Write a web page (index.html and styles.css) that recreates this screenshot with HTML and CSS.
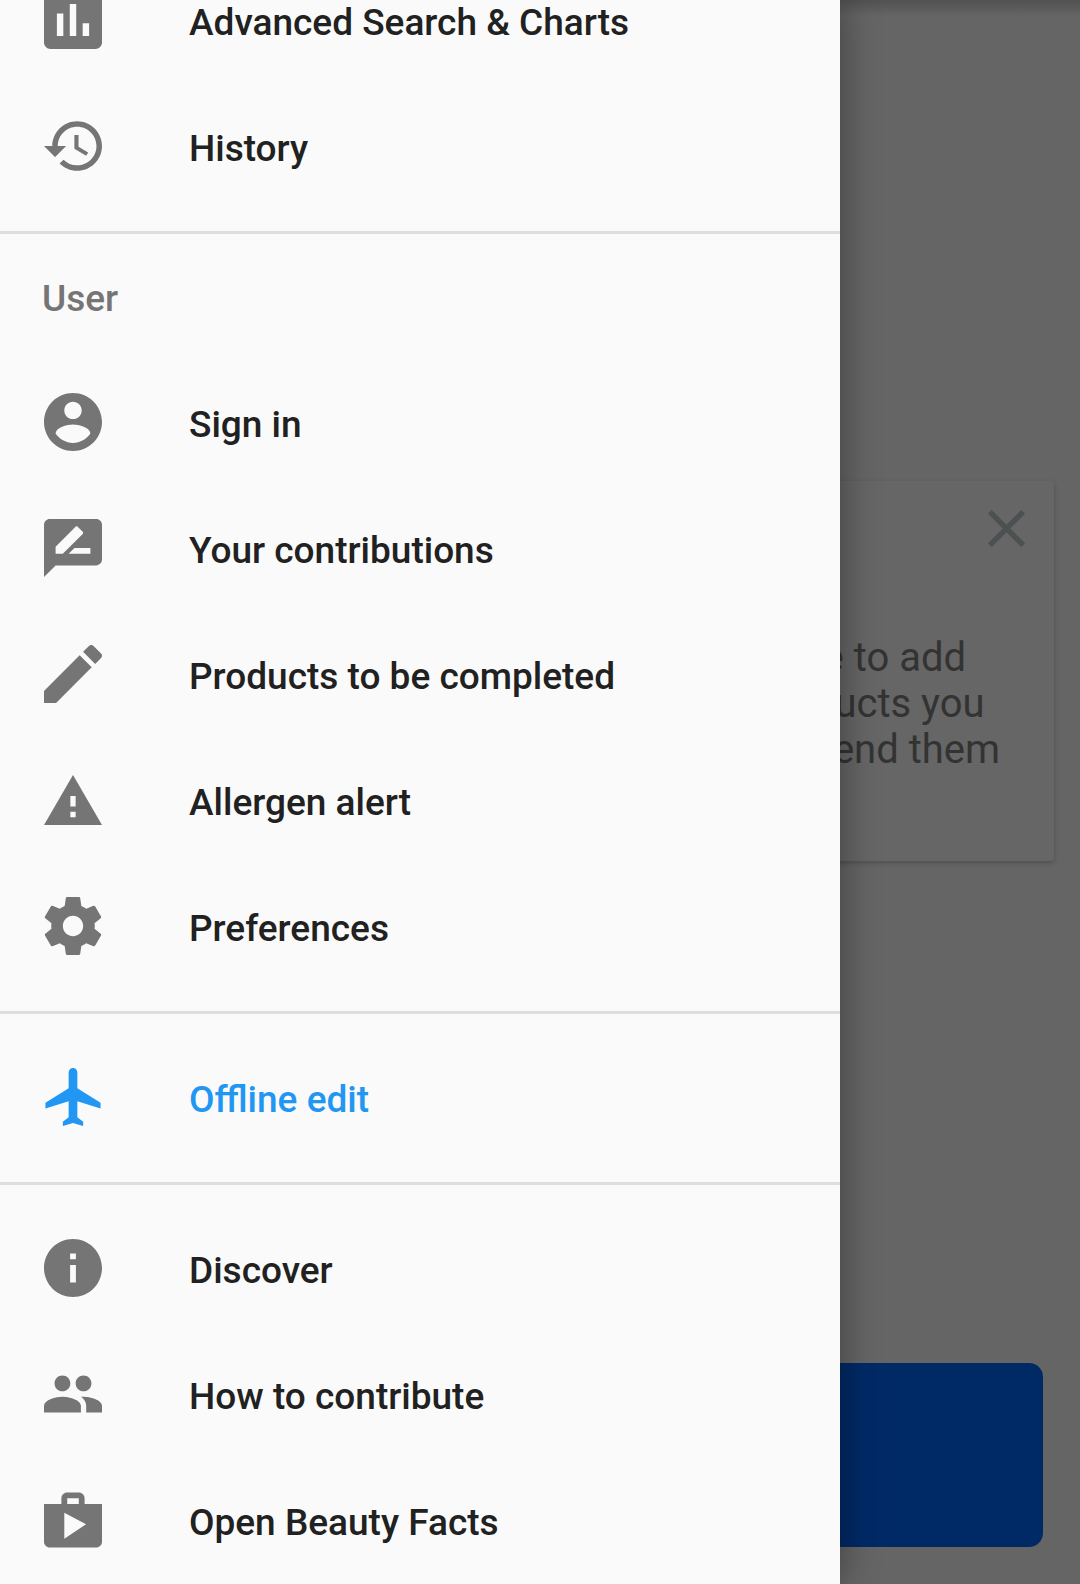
FILE: index.html
```html
<html>
<head>
    <title>Open Food Facts menu</title>
    <link rel="stylesheet" href="styles.css">
</head>
<body>
<div class="screen">

    <div class="content">
        <div class="card">
            <svg class="closeIcon" viewBox="5 5 14 14"><path d="M19 6.41L17.59 5 12 10.59 6.41 5 5 6.41 10.59 12 5 17.59 6.41 19 12 13.41 17.59 19 19 17.59 13.41 12z"/></svg>
            <p class="cardText">Make to add<br>conducts you<br>the send them</p>
        </div>
        <div class="bigButton"></div>
    </div>
    <div class="topShadow"></div>

    <div class="drawer">
        <div class="item firstItem">
            <svg class="icon" viewBox="3 3 18 18"><path d="M19 3H5c-1.1 0-2 .9-2 2v14c0 1.1.9 2 2 2h14c1.1 0 2-.9 2-2V5c0-1.1-.9-2-2-2zM9 17H7v-7h2v7zm4 0h-2V7h2v10zm4 0h-2v-4h2v4z"/></svg>
            <span>Advanced Search &amp; Charts</span>
        </div>
        <div class="item">
            <svg class="icon" viewBox="1 3 21 18"><path d="M13 3c-4.97 0-9 4.03-9 9H1l3.89 3.89.07.14L9 12H6c0-3.87 3.13-7 7-7s7 3.13 7 7-3.13 7-7 7c-1.93 0-3.68-.79-4.94-2.06l-1.42 1.42C8.27 19.99 10.51 21 13 21c4.97 0 9-4.03 9-9s-4.03-9-9-9zm-1 5v5l4.28 2.54.72-1.21-3.5-2.08V8H12z"/></svg>
            <span>History</span>
        </div>
        <div class="divider"></div>

        <div class="sectionTitle">User</div>
        <div class="item">
            <svg class="icon" viewBox="2 2 20 20"><path d="M12 2C6.48 2 2 6.48 2 12s4.48 10 10 10 10-4.48 10-10S17.52 2 12 2zm0 3c1.66 0 3 1.34 3 3s-1.34 3-3 3-3-1.34-3-3 1.34-3 3-3zm0 14.2c-2.5 0-4.71-1.28-6-3.22.03-1.99 4-3.08 6-3.08 1.99 0 5.97 1.09 6 3.08-1.29 1.94-3.5 3.22-6 3.22z"/></svg>
            <span>Sign in</span>
        </div>
        <div class="item">
            <svg class="icon" viewBox="2 2 20 20"><path d="M20 2H4c-1.1 0-1.99.9-1.99 2L2 22l4-4h14c1.1 0 2-.9 2-2V4c0-1.1-.9-2-2-2zM6 14v-2.47l6.88-6.88c.2-.2.51-.2.71 0l1.77 1.77c.2.2.2.51 0 .71L8.47 14H6zm12 0h-7.5l2-2H18v2z"/></svg>
            <span>Your contributions</span>
        </div>
        <div class="item">
            <svg class="icon" viewBox="3 3 18 18"><path d="M3 17.25V21h3.75L17.81 9.94l-3.75-3.75L3 17.25zM20.71 7.04c.39-.39.39-1.02 0-1.41l-2.34-2.34c-.39-.39-1.02-.39-1.41 0l-1.83 1.83 3.75 3.75 1.83-1.83z"/></svg>
            <span>Products to be completed</span>
        </div>
        <div class="item">
            <svg class="icon" viewBox="1 2 22 19"><path d="M1 21h22L12 2 1 21zm12-3h-2v-2h2v2zm0-4h-2v-4h2v4z"/></svg>
            <span>Allergen alert</span>
        </div>
        <div class="item">
            <svg class="icon" viewBox="2 2 20 20"><path d="M19.43 12.98c.04-.32.07-.64.07-.98s-.03-.66-.07-.98l2.11-1.65c.19-.15.24-.42.12-.64l-2-3.46c-.12-.22-.39-.3-.61-.22l-2.49 1c-.52-.4-1.08-.73-1.69-.98l-.38-2.65C14.46 2.18 14.25 2 14 2h-4c-.25 0-.46.18-.49.42l-.38 2.65c-.61.25-1.17.59-1.69.98l-2.49-1c-.23-.09-.49 0-.61.22l-2 3.46c-.13.22-.07.49.12.64l2.11 1.65c-.04.32-.07.65-.07.98s.03.66.07.98l-2.11 1.65c-.19.15-.24.42-.12.64l2 3.46c.12.22.39.3.61.22l2.49-1c.52.4 1.08.73 1.69.98l.38 2.65c.03.24.24.42.49.42h4c.25 0 .46-.18.49-.42l.38-2.65c.61-.25 1.17-.59 1.69-.98l2.49 1c.23.09.49 0 .61-.22l2-3.46c.12-.22.07-.49-.12-.64l-2.11-1.65zM12 15.5c-1.93 0-3.5-1.57-3.5-3.5s1.57-3.5 3.5-3.5 3.5 1.57 3.5 3.5-1.57 3.5-3.5 3.5z"/></svg>
            <span>Preferences</span>
        </div>
        <div class="divider"></div>

        <div class="item active">
            <svg class="icon" viewBox="2 2 19 20"><path d="M21 16v-2l-8-5V3.5c0-.83-.67-1.5-1.5-1.5S10 2.67 10 3.5V9l-8 5v2l8-2.5V19l-2 1.5V22l3.5-1 3.5 1v-1.5L13 19v-5.5l8 2.5z"/></svg>
            <span>Offline edit</span>
        </div>
        <div class="divider"></div>

        <div class="item">
            <svg class="icon" viewBox="2 2 20 20"><path d="M12 2C6.48 2 2 6.48 2 12s4.48 10 10 10 10-4.48 10-10S17.52 2 12 2zm1 15h-2v-6h2v6zm0-8h-2V7h2v2z"/></svg>
            <span>Discover</span>
        </div>
        <div class="item">
            <svg class="icon" viewBox="1 5 22 14"><path d="M16 11c1.66 0 2.99-1.34 2.99-3S17.66 5 16 5c-1.66 0-3 1.34-3 3s1.34 3 3 3zm-8 0c1.66 0 2.99-1.34 2.99-3S9.66 5 8 5C6.34 5 5 6.34 5 8s1.34 3 3 3zm0 2c-2.33 0-7 1.17-7 3.5V19h14v-2.5c0-2.33-4.67-3.5-7-3.5zm8 0c-.29 0-.62.02-.97.05 1.16.84 1.97 1.97 1.97 3.45V19h6v-2.5c0-2.33-4.67-3.5-7-3.5z"/></svg>
            <span>How to contribute</span>
        </div>
        <div class="item">
            <svg class="icon" viewBox="2 2 20 19"><path d="M16 6V4c0-1.11-.89-2-2-2h-4c-1.11 0-2 .89-2 2v2H2v13c0 1.11.89 2 2 2h16c1.11 0 2-.89 2-2V6h-6zm-6-2h4v2h-4V4zM9 18V9l7.5 4L9 18z"/></svg>
            <span>Open Beauty Facts</span>
        </div>
    </div>

</div>
</body>
</html>
```

FILE: styles.css
```css
body {
    margin: 0;
    font-family: Roboto, "Liberation Sans", sans-serif;
}

.screen {
    position: relative;
    width: 1080px;
    height: 1584px;
    overflow: hidden;
    background-color: #656565;
}

/* Page behind the drawer, dimmed */
.content {
    display: flex;
    flex-direction: column;
    padding: 481px 26px 0 26px;
}

.card {
    display: flex;
    flex-direction: column;
    height: 380px;
    background-color: #666666;
    border-radius: 4px;
    box-shadow: 0 2px 5px rgba(0, 0, 0, 0.22);
}

.closeIcon {
    align-self: flex-end;
    width: 37px;
    height: 37px;
    margin: 29px 29px 0 0;
    fill: #4a5150;
}

.cardText {
    margin: 88px 0 0 720px;
    font-size: 40px;
    line-height: 46px;
    white-space: nowrap;
    color: #333333;
}

.bigButton {
    height: 184px;
    margin: 502px 11px 0 0;
    border-radius: 14px;
    background-color: #002a66;
}

.topShadow {
    position: absolute;
    top: 0;
    left: 0;
    right: 0;
    height: 16px;
    background: linear-gradient(rgba(0, 0, 0, 0.2), rgba(0, 0, 0, 0));
}

/* Navigation drawer */
.drawer {
    position: absolute;
    top: 0;
    left: 0;
    width: 840px;
    height: 1584px;
    overflow: hidden;
    background-color: #fafafa;
    box-shadow: 0 0 36px rgba(0, 0, 0, 0.4);
}

.item {
    display: flex;
    align-items: center;
    gap: 87px;
    height: 126px;
    padding-left: 44px;
    font-size: 37px;
    font-weight: 500;
    color: #212121;
}

.firstItem {
    margin-top: -41px;
}

.icon {
    flex: none;
    width: 58px;
    height: 58px;
    margin-bottom: 4px;
    fill: #757575;
}

.active {
    color: #2196f3;
}

.active .icon {
    fill: #2196f3;
}

.divider {
    height: 3px;
    margin: 20px 0 22px;
    background-color: #dedede;
}

.sectionTitle {
    box-sizing: border-box;
    height: 105px;
    padding: 20px 0 0 42px;
    line-height: 46px;
    font-size: 37px;
    font-weight: 500;
    color: #757575;
}
```
